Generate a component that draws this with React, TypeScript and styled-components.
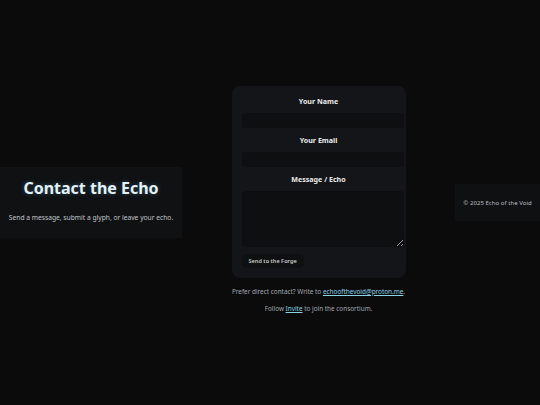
import { FC } from "react";
import styled, { createGlobalStyle } from "styled-components";

const GlobalStyle = createGlobalStyle`
  html, body {
    margin: 0;
    padding: 0;
    background: #0b0b0c;
  }
  body {
    font-family: "Noto Sans", "Open Sans", sans-serif;
    color: #d8d8d8;
  }
`;

const Page = styled.div`
  display: flex;
  align-items: center;
  justify-content: space-between;
  height: 405px;
  width: 540px;
`;

const Header = styled.header`
  width: 182px;
  box-sizing: border-box;
  padding: 10px 8px 16px;
  background: #0f1113;
  text-align: center;
`;

const Title = styled.h1`
  margin: 0 0 14px;
  font-size: 16px;
  line-height: 22px;
  font-weight: 700;
  color: #e2f2f8;
  text-shadow: 0 0 5px rgba(140, 210, 255, 0.3);
`;

const Tagline = styled.p`
  margin: 0;
  font-size: 6.7px;
  line-height: 9px;
  color: #c2c6ca;
`;

const Main = styled.main`
  width: 174px;
  padding-bottom: 7px;
`;

const Card = styled.form`
  display: flex;
  flex-direction: column;
  gap: 7px;
  padding: 10px;
  background: #141518;
  border-radius: 8px;
`;

const Label = styled.label`
  display: block;
  text-align: center;
  font-size: 7.1px;
  line-height: 10px;
  font-weight: 700;
  color: #ececec;
`;

const Input = styled.input`
  box-sizing: content-box;
  width: 100%;
  height: 15px;
  padding: 0 4px;
  border: none;
  border-radius: 4px;
  background: #0e0f11;
  color: #ddd;
  outline: none;
  font: inherit;
  font-size: 7px;
`;

const TextArea = styled.textarea`
  box-sizing: content-box;
  width: 100%;
  height: 56px;
  padding: 0 4px;
  border: none;
  border-radius: 4px;
  background: #0e0f11;
  color: #ddd;
  outline: none;
  font: inherit;
  font-size: 7px;
`;

const Button = styled.button`
  align-self: flex-start;
  height: 14px;
  padding: 0 7px;
  border: none;
  border-radius: 5px;
  background: #0f1012;
  color: #c9c9c9;
  font-family: inherit;
  font-size: 5.6px;
  font-weight: 600;
  cursor: pointer;
`;

const Note = styled.p<{ $top: number }>`
  margin: ${(p) => p.$top}px 0 0;
  text-align: center;
  font-size: 6.4px;
  line-height: 9px;
  color: #a4a9ae;
`;

const Link = styled.a`
  color: #86d4e6;
  text-decoration: underline;
`;

const Footer = styled.footer`
  width: 85px;
  box-sizing: border-box;
  padding: 14px 6px;
  background: #0f1012;
  text-align: center;
  font-size: 6.1px;
  line-height: 9px;
  color: #b8bcc0;
`;

const App: FC = () => {
  return (
    <>
      <GlobalStyle />
      <Page>
        <Header>
          <Title>Contact the Echo</Title>
          <Tagline>Send a message, submit a glyph, or leave your echo.</Tagline>
        </Header>
        <Main>
          <Card onSubmit={(e) => e.preventDefault()}>
            <Label htmlFor="name">Your Name</Label>
            <Input id="name" type="text" />
            <Label htmlFor="email">Your Email</Label>
            <Input id="email" type="email" />
            <Label htmlFor="msg">Message / Echo</Label>
            <TextArea id="msg" />
            <Button type="submit">Send to the Forge</Button>
          </Card>
          <Note $top={9}>
            Prefer direct contact? Write to{" "}
            <Link href="#">echoofthevoid@proton.me</Link>.
          </Note>
          <Note $top={8}>
            Follow <Link href="#">Invite</Link> to join the consortium.
          </Note>
        </Main>
        <Footer>© 2025 Echo of the Void</Footer>
      </Page>
    </>
  );
};

export default App;
